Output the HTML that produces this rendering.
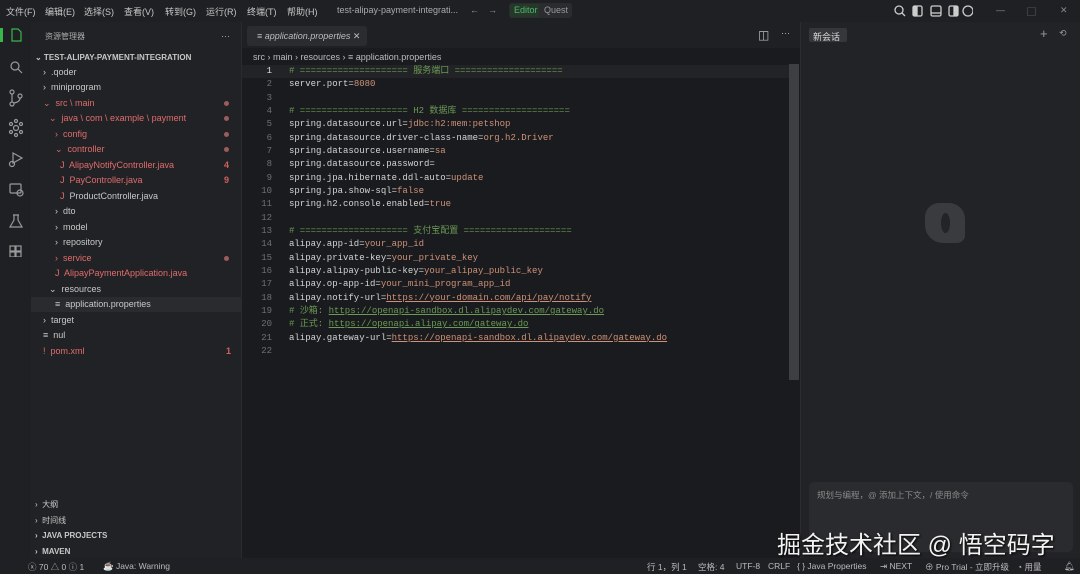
<!DOCTYPE html>
<html><head><meta charset="utf-8"><style>
*{margin:0;padding:0;box-sizing:border-box}
body{width:1080px;height:574px;overflow:hidden;background:#1b1c1f;font-family:"Liberation Sans","Noto Sans CJK SC",sans-serif;color:#ccc;position:relative;font-size:9px}
.abs{position:absolute}
#title{left:0;top:0;width:1080px;height:22px;background:#1f2023}
#title span{position:absolute;top:5px;font-size:9px;color:#c8c8c8}
#act{left:0;top:22px;width:31px;height:536px;background:#1f2023}
#side{left:31px;top:22px;width:211px;height:536px;background:#212225;border-right:1px solid #2a2b2e}
.row{position:absolute;left:0;width:210px;height:15px;line-height:15px;font-size:9px;color:#c8c8c8;white-space:nowrap}
.red{color:#e06c6c}
.dot{position:absolute;right:12px;top:5px;width:5px;height:5px;border-radius:50%;background:#9a5c5c}
.num{position:absolute;right:11px;color:#d06060}
#editor{left:242px;top:22px;width:558px;height:536px;background:#1a1b1e}
#tabs{left:242px;top:22px;width:558px;height:26px;background:#1f2023}
.code{position:absolute;left:242px;width:548px;height:13.33px;line-height:13.33px;font-family:"Liberation Mono","Noto Sans CJK SC",monospace;font-size:9px;white-space:pre;color:#d4d4d4}
.code .n{position:absolute;left:0;width:30px;text-align:right;color:#6e7075}
.code .t{position:absolute;left:47px}
.c{color:#6a9955}.v{color:#ce9178}.u{color:#ce9178;text-decoration:underline}.cu{color:#6a9955;text-decoration:underline}
#right{left:800px;top:22px;width:280px;height:536px;background:#222326;border-left:1px solid #2c2d30}
#status{left:0;top:558px;width:1080px;height:16px;background:#1f2023;font-size:8.5px;color:#bbb}
#status span{position:absolute;top:3px;white-space:nowrap}
</style></head><body>
<div id="title" class="abs">
<span style="left:6px">文件(F)</span><span style="left:45px">编辑(E)</span><span style="left:84px">选择(S)</span><span style="left:124px">查看(V)</span><span style="left:165px">转到(G)</span><span style="left:206px">运行(R)</span><span style="left:247px">终端(T)</span><span style="left:287px">帮助(H)</span>
<span style="left:337px;color:#aaa">test-alipay-payment-integrati...</span>
<span style="left:470px;color:#999">←</span><span style="left:488px;color:#999">→</span>
<div class="abs" style="left:509px;top:3px;width:63px;height:15px;background:#2b2c2f;border-radius:3px"></div>
<div class="abs" style="left:510px;top:4px;width:29px;height:13px;background:#26382a;border-radius:2px"></div>
<span style="left:514px;color:#4fb86a">Editor</span><span style="left:544px;color:#999">Quest</span>
<svg class="abs" style="left:893px;top:4px" width="80" height="14" fill="none" stroke="#ccc" stroke-width="1.3"><circle cx="6" cy="6" r="4"/><path d="M9 9l3 3"/><rect x="20" y="2" width="9" height="10" rx="1.5"/><rect x="21" y="3" width="3" height="8" fill="#ccc"/><rect x="38" y="2" width="10" height="10" rx="1.5"/><path d="M38 9h10"/><rect x="56" y="2" width="9" height="10" rx="1.5"/><rect x="61" y="3" width="3" height="8" fill="#ccc"/><circle cx="75" cy="7" r="5"/></svg>
<span style="left:996px;color:#888">—</span><span style="left:1027px;color:#888">▢</span><span style="left:1060px;color:#888">✕</span>
</div>
<div id="act" class="abs">
<div class="abs" style="left:0;top:6px;width:3px;height:14px;background:#3ab54a"></div>
<svg class="abs" style="left:8px;top:5px" width="16" height="230" fill="none" stroke="#9a9a9a" stroke-width="1.2">
<path d="M4 2h6l3 3v9H4z" stroke="#3ab54a"/>
<circle cx="7" cy="39" r="4"/><path d="M10 42l4 4"/>
<circle cx="4" cy="65" r="2"/><circle cx="4" cy="77" r="2"/><circle cx="12" cy="69" r="2"/><path d="M4 67v8M12 71q0 4-6 5"/>
<circle cx="8" cy="101" r="2.5"/><circle cx="3" cy="97" r="1.5"/><circle cx="13" cy="97" r="1.5"/><circle cx="3" cy="105" r="1.5"/><circle cx="13" cy="105" r="1.5"/><circle cx="8" cy="94" r="1.5"/><circle cx="8" cy="108" r="1.5"/>
<path d="M5 126l9 5-9 5z"/><circle cx="4" cy="137" r="2.5"/>
<rect x="2" y="157" width="11" height="9" rx="1"/><circle cx="12" cy="166" r="3"/>
<path d="M6 188v5l-4 7h12l-4-7v-5M5 188h6"/>
<rect x="2" y="219" width="5" height="5"/><rect x="8" y="219" width="5" height="5"/><rect x="2" y="225" width="5" height="5"/><rect x="8" y="225" width="5" height="5"/>
</svg>
<svg class="abs" style="left:8px;top:539px" width="12" height="12" fill="none" stroke="#aaa"><path d="M2 10l4-4M6 6l4 4M6 6l3-4"/></svg>
</div>
<div id="side" class="abs">
<div class="row" style="top:7px;left:14px;font-size:8px;color:#aaa">资源管理器</div>
<div class="row" style="top:7px;left:190px;color:#aaa">···</div>
<div class="row" style="top:28px;left:4px;font-weight:bold;font-size:8px">⌄ TEST-ALIPAY-PAYMENT-INTEGRATION</div>
<div class="row" style="top:43px;left:12px">›&nbsp; .qoder</div>
<div class="row" style="top:58px;left:12px">›&nbsp; miniprogram</div>
<div class="row red" style="top:74px;left:12px">⌄&nbsp; src \ main<i class="dot" style="right:24px"></i></div>
<div class="row red" style="top:89px;left:18px">⌄&nbsp; java \ com \ example \ payment<i class="dot" style="right:30px"></i></div>
<div class="row red" style="top:105px;left:24px">›&nbsp; config<i class="dot" style="right:36px"></i></div>
<div class="row red" style="top:120px;left:24px">⌄&nbsp; controller<i class="dot" style="right:36px"></i></div>
<div class="row red" style="top:136px;left:29px">J&nbsp; AlipayNotifyController.java<b class="num" style="right:41px">4</b></div>
<div class="row red" style="top:151px;left:29px">J&nbsp; PayController.java<b class="num" style="right:41px">9</b></div>
<div class="row" style="top:167px;left:29px"><span class="red">J</span>&nbsp; ProductController.java</div>
<div class="row" style="top:182px;left:24px">›&nbsp; dto</div>
<div class="row" style="top:198px;left:24px">›&nbsp; model</div>
<div class="row" style="top:213px;left:24px">›&nbsp; repository</div>
<div class="row red" style="top:229px;left:24px">›&nbsp; service<i class="dot" style="right:36px"></i></div>
<div class="row red" style="top:244px;left:24px">J&nbsp; AlipayPaymentApplication.java</div>
<div class="row" style="top:260px;left:18px">⌄&nbsp; resources</div>
<div class="row" style="top:275px;left:0;padding-left:24px;background:#2a2b2e;width:210px">≡&nbsp; application.properties</div>
<div class="row" style="top:291px;left:12px">›&nbsp; target</div>
<div class="row" style="top:306px;left:12px">≡&nbsp; nul</div>
<div class="row red" style="top:322px;left:12px">!&nbsp; pom.xml<b class="num" style="right:22px">1</b></div>
<div class="row" style="top:475px;left:4px;font-size:8px">›&nbsp; 大纲</div>
<div class="row" style="top:491px;left:4px;font-size:8px">›&nbsp; 时间线</div>
<div class="row" style="top:506px;left:4px;font-size:8px;font-weight:bold">›&nbsp; JAVA PROJECTS</div>
<div class="row" style="top:522px;left:4px;font-size:8px;font-weight:bold">›&nbsp; MAVEN</div>
</div>
<div id="editor" class="abs"></div>
<div id="tabs" class="abs">
<div class="abs" style="left:5px;top:4px;width:120px;height:20px;background:#2b2c30;border-radius:3px"></div>
<span class="abs" style="left:15px;top:9px;color:#bbb">≡ <i>application.properties</i> ✕</span>
<span class="abs" style="left:516px;top:6px;color:#bbb;font-size:12px">◫</span><span class="abs" style="left:539px;top:6px;color:#bbb">···</span>
</div>
<div class="abs" style="left:253px;top:52px;color:#bbb">src › main › resources › ≡ application.properties</div>
<div class="abs" style="left:242px;top:65px;width:547px;height:13px;background:#222326"></div>
<div class="abs" style="left:789px;top:64px;width:10px;height:316px;background:#3e3f42"></div>
<div class="code" style="top:65px"><span class="n" style="color:#ddd">1</span><span class="t c"># ==================== 服务端口 ====================</span></div>
<div class="code" style="top:78.3px"><span class="n">2</span><span class="t">server.port=<span class="v">8080</span></span></div>
<div class="code" style="top:91.6px"><span class="n">3</span></div>
<div class="code" style="top:105px"><span class="n">4</span><span class="t c"># ==================== H2 数据库 ====================</span></div>
<div class="code" style="top:118.3px"><span class="n">5</span><span class="t">spring.datasource.url=<span class="v">jdbc:h2:mem:petshop</span></span></div>
<div class="code" style="top:131.6px"><span class="n">6</span><span class="t">spring.datasource.driver-class-name=<span class="v">org.h2.Driver</span></span></div>
<div class="code" style="top:145px"><span class="n">7</span><span class="t">spring.datasource.username=<span class="v">sa</span></span></div>
<div class="code" style="top:158.3px"><span class="n">8</span><span class="t">spring.datasource.password=</span></div>
<div class="code" style="top:171.6px"><span class="n">9</span><span class="t">spring.jpa.hibernate.ddl-auto=<span class="v">update</span></span></div>
<div class="code" style="top:185px"><span class="n">10</span><span class="t">spring.jpa.show-sql=<span class="v">false</span></span></div>
<div class="code" style="top:198.3px"><span class="n">11</span><span class="t">spring.h2.console.enabled=<span class="v">true</span></span></div>
<div class="code" style="top:211.6px"><span class="n">12</span></div>
<div class="code" style="top:225px"><span class="n">13</span><span class="t c"># ==================== 支付宝配置 ====================</span></div>
<div class="code" style="top:238.3px"><span class="n">14</span><span class="t">alipay.app-id=<span class="v">your_app_id</span></span></div>
<div class="code" style="top:251.6px"><span class="n">15</span><span class="t">alipay.private-key=<span class="v">your_private_key</span></span></div>
<div class="code" style="top:265px"><span class="n">16</span><span class="t">alipay.alipay-public-key=<span class="v">your_alipay_public_key</span></span></div>
<div class="code" style="top:278.3px"><span class="n">17</span><span class="t">alipay.op-app-id=<span class="v">your_mini_program_app_id</span></span></div>
<div class="code" style="top:291.6px"><span class="n">18</span><span class="t">alipay.notify-url=<span class="u">https://your-domain.com/api/pay/notify</span></span></div>
<div class="code" style="top:305px"><span class="n">19</span><span class="t c"># 沙箱: <span class="cu">https://openapi-sandbox.dl.alipaydev.com/gateway.do</span></span></div>
<div class="code" style="top:318.3px"><span class="n">20</span><span class="t c"># 正式: <span class="cu">https://openapi.alipay.com/gateway.do</span></span></div>
<div class="code" style="top:331.6px"><span class="n">21</span><span class="t">alipay.gateway-url=<span class="u">https://openapi-sandbox.dl.alipaydev.com/gateway.do</span></span></div>
<div class="code" style="top:345px"><span class="n">22</span></div>
<div id="right" class="abs">
<div class="abs" style="left:8px;top:6px;width:38px;height:14px;background:#36373a;border-radius:2px"></div>
<span class="abs" style="left:12px;top:8px;color:#ddd">新会话</span>
<span class="abs" style="left:239px;top:4px;color:#999;font-size:13px">+</span><span class="abs" style="left:258px;top:6px;color:#999">⟲</span>
<div class="abs" style="left:124px;top:181px;width:40px;height:40px;border-radius:14px 16px 8px 18px;background:#3a3b3e"></div>
<div class="abs" style="left:140px;top:191px;width:9px;height:20px;border-radius:50%;background:#232427"></div>
<div class="abs" style="left:8px;top:460px;width:264px;height:70px;background:#2a2b2e;border-radius:5px"></div>
<span class="abs" style="left:16px;top:467px;color:#8a8a8a;font-size:8.5px">规划与编程，@ 添加上下文，/ 使用命令</span>
</div>
<div class="abs" style="left:777px;top:525px;font-size:24px;color:#f2f2f2;text-shadow:1px 1px 2px #000;white-space:nowrap">掘金技术社区 @ 悟空码字</div>
<div id="status" class="abs">
<span style="left:28px">ⓧ 70 △ 0 ⓘ 1</span><span style="left:103px">☕ Java: Warning</span>
<span style="left:647px">行 1，列 1</span><span style="left:698px">空格: 4</span><span style="left:736px">UTF-8</span><span style="left:768px">CRLF</span><span style="left:797px">{ } Java Properties</span><span style="left:880px">⇥ NEXT</span><span style="left:925px">⊕ Pro Trial - 立即升级</span><span style="left:1017px">◔ 用量</span><span style="left:1064px">🔔︎</span>
</div>
</body></html>
